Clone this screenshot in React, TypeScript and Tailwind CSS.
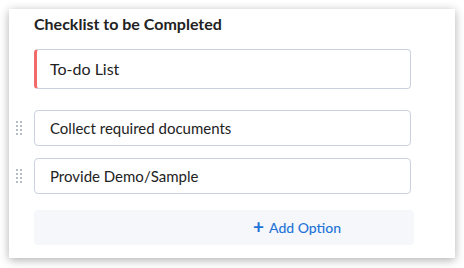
const ITEMS = ['Collect required documents', 'Provide Demo/Sample']

function DragHandle() {
  return (
    <div className="grid grid-cols-2 gap-x-[2px] gap-y-[2px] w-[6px]">
      {Array.from({ length: 8 }).map((_, i) => (
        <span key={i} className="block w-[2px] h-[2px] bg-[#b5bcc6]" />
      ))}
    </div>
  )
}

export default function App() {
  return (
    <div className="w-[464px] h-[268px] bg-white p-[9px] font-['Lato',sans-serif]">
      <div className="w-[446px] h-[249px] bg-white shadow-[0_2px_9px_rgba(0,0,0,0.32)] pl-[25px] pt-[5px]">
        <h2 className="text-[16px] leading-[20px] font-bold text-[#222]">Checklist to be Completed</h2>

        <div className="mt-[15px] w-[377px] h-[40px] flex items-center border border-[#c9d2de] border-l-[3px] border-l-[#f26a6a] rounded-[4px] pl-[13px] text-[16px] text-[#222]">
          To-do List
        </div>

        <div className="mt-[21px] flex flex-col gap-[12px]">
          {ITEMS.map(item => (
            <div key={item} className="relative">
              <div className="absolute left-[-18px] top-[11px]">
                <DragHandle />
              </div>
              <div className="w-[377px] h-[36px] flex items-center border border-[#c9d2de] rounded-[4px] pl-[15px] text-[15px] text-[#222]">
                {item}
              </div>
            </div>
          ))}
        </div>

        <div className="mt-[16px] w-[380px] h-[35px] bg-[#f5f7fa] rounded-[4px] flex items-center pl-[219px] text-[14px] font-medium text-[#1e73d8]">
          <span className="mr-[5px] text-[19px] font-bold leading-none -mt-[2px]">+</span>Add Option
        </div>
      </div>
    </div>
  )
}
